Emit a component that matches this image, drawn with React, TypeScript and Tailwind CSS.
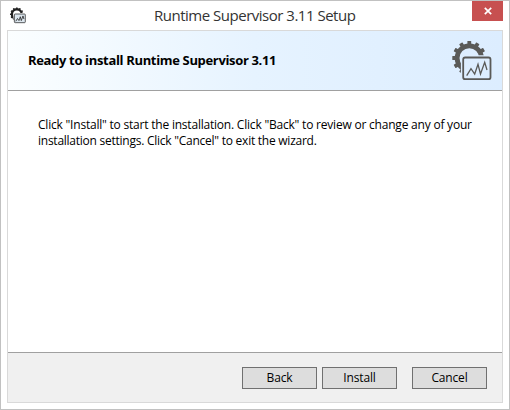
import React from "react";

const TEETH = [210, 240, 270, 300, 330, 0, 30, 60, 90];

function SupervisorIcon({ className, dark = false }: { className: string; dark?: boolean }) {
  const ink = dark ? "#222222" : "#5a5a58";
  return (
    <svg className={className} viewBox="0 0 40 40" fill="none" aria-hidden="true">
      <defs>
        <clipPath id={dark ? "gear-small" : "gear-large"}>
          <path d="M0 0H40V15.2H12Q9.9 15.2 9.9 17.5V40H0Z" />
        </clipPath>
      </defs>
      <g clipPath={dark ? "url(#gear-small)" : "url(#gear-large)"}>
        <circle cx="18.3" cy="18" r="12.2" stroke={ink} strokeWidth={dark ? 6 : 4.8} />
        {TEETH.map((a) => (
          <rect key={a} x="16.4" y="1" width="3.8" height="4.5" rx=".5" fill={ink} transform={`rotate(${a} 18.3 18)`} />
        ))}
      </g>
      <rect x="12.2" y="17.5" width="27.3" height="21.7" rx="2" stroke={ink} strokeWidth="1.8" fill={dark ? "#dce6ee" : "none"} />
      <path d="M15.7 35.7L20 28.7L23.7 34L27 24.3L29.5 34L33.7 22.3L36 30" stroke={ink} strokeWidth={dark ? 2 : 1.3} />
    </svg>
  );
}

function DialogButton({ label, className = "" }: { label: string; className?: string }) {
  return (
    <button className={`flex h-[22px] w-[75px] items-center justify-center border border-[#707070] bg-[#dddddd] text-[12px] leading-none tracking-[-0.15px] text-black ${className}`}>
      {label}
    </button>
  );
}

export default function App() {
  return (
    <div className="flex h-[410px] w-[510px] flex-col border border-[#c1c1c1] bg-white px-[6px] pb-[6px] font-['Open_Sans','Noto_Sans',sans-serif] text-black">
      <header className="flex h-[29px] shrink-0 items-start">
        <SupervisorIcon dark className="mt-[6px] ml-[2px] h-[16px] w-[17px] overflow-visible" />
        <h1 className="ml-[128px] mt-[4px] whitespace-nowrap text-[15px] leading-[20px] tracking-[-0.49px] text-[#333333]">Runtime Supervisor 3.11 Setup</h1>
        <button aria-label="Close" className="ml-auto flex h-[20px] w-[31px] items-center justify-center bg-[#c75050]">
          <svg className="h-[8px] w-[8px]" viewBox="0 0 8 8" fill="none">
            <path d="M.8 .8L7.2 7.2M7.2 .8L.8 7.2" stroke="white" strokeWidth="1.7" />
          </svg>
        </button>
      </header>
      <main className="flex flex-1 flex-col border border-[#d9d9d9]">
        <div className="flex h-[60px] shrink-0 items-center justify-between border-b border-[#a0a0a0] bg-linear-to-r from-[#fbfeff] via-[#e6f3ff] to-[#dcedff] pr-[11px] pl-[20px]">
          <h2 className="whitespace-nowrap text-[13px] font-bold tracking-[-0.34px]">Ready to install Runtime Supervisor 3.11</h2>
          <SupervisorIcon className="mb-[1px] h-[40px] w-[40px] overflow-visible" />
        </div>
        <div className="flex-1 pt-[26px] pl-[30px] text-[12px] leading-[16px]">
          <p className="whitespace-nowrap tracking-[-0.21px]">Click "Install" to start the installation. Click "Back" to review or change any of your</p>
          <p className="whitespace-nowrap tracking-[-0.25px]">installation settings. Click "Cancel" to exit the wizard.</p>
        </div>
        <footer className="flex h-[50px] shrink-0 border-t border-[#a0a0a0] bg-[#f0f0f0] pt-[14px] pl-[234px]">
          <DialogButton label="Back" />
          <DialogButton label="Install" className="ml-[5px]" />
          <DialogButton label="Cancel" className="ml-[15px]" />
        </footer>
      </main>
    </div>
  );
}
